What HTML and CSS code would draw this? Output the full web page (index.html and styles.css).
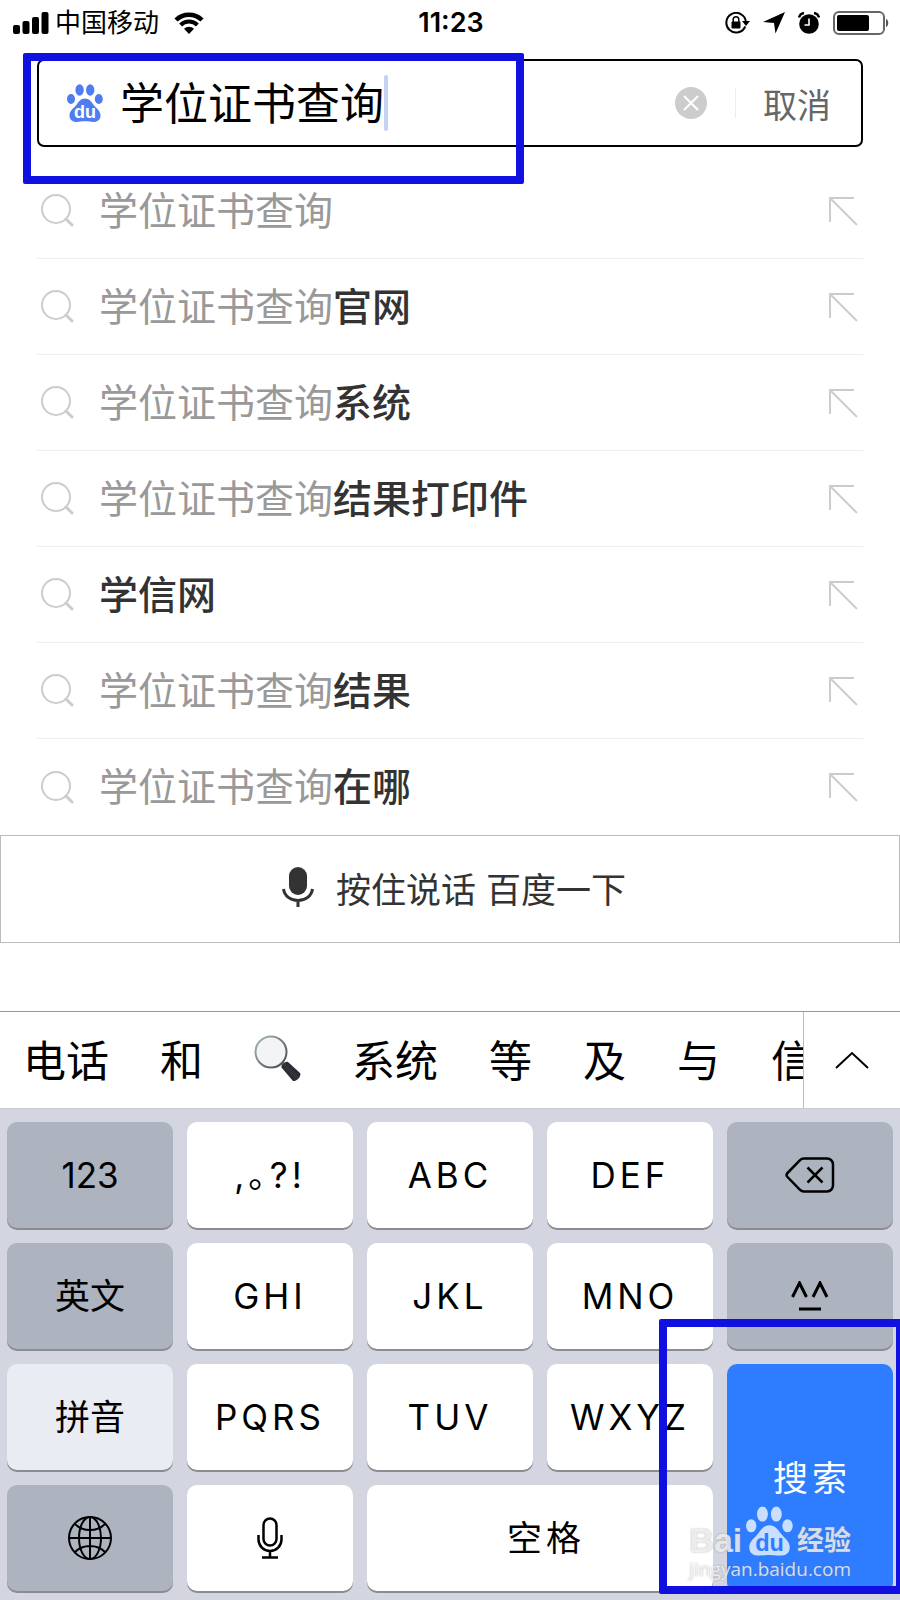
FILE: index.html
```
<!DOCTYPE html>
<html lang="zh-CN">
<head>
    <meta charset="UTF-8">
    <meta name="viewport" content="width=device-width, initial-scale=1.0">
    <title>学位证书查询</title>
    <link rel="stylesheet" href="styles.css">
</head>
<body>
    <!-- shared icons -->
    <svg class="defs" width="0" height="0" aria-hidden="true">
        <symbol id="icon-search" viewBox="0 0 33 33">
            <circle cx="15" cy="15" r="14" fill="none" stroke="#ccc" stroke-width="2"/>
            <path d="M25 25l6 6" stroke="#ccc" stroke-width="3" stroke-linecap="round"/>
        </symbol>
        <symbol id="icon-fill" viewBox="0 0 30 30">
            <path d="M26 2H2v24M2 2l27 27" fill="none" stroke="#ccc" stroke-width="2"/>
        </symbol>
        <symbol id="paw" viewBox="0 0 36 38">
            <ellipse cx="4" cy="15" rx="4" ry="5"/>
            <ellipse cx="12.6" cy="6" rx="4.2" ry="5.8"/>
            <ellipse cx="23.2" cy="6" rx="4.2" ry="5.8"/>
            <ellipse cx="31.8" cy="15" rx="4" ry="5"/>
            <path d="M18 14.5c4 0 6.300 3 8.500 6.200 2.500 3.400 7 5.800 7 10.800 0 4.300-3 6.500-7 6.500-3 0-5-.7-8.500-.7s-5.500.7-8.500.7c-4 0-7-2.200-7-6.500 0-5 4.500-7.400 7-10.800C11.700 17.500 14 14.500 18 14.500z"/>
        </symbol>
    </svg>

    <div class="status">
        <div class="status-left">
            <svg width="36" height="22" viewBox="0 0 36 22"><rect x="0" y="13" width="7" height="9" rx="2"/><rect x="9.500" y="9" width="7" height="13" rx="2"/><rect x="19" y="5" width="7" height="17" rx="2"/><rect x="28.500" y="0" width="7" height="22" rx="2"/></svg>
            <span class="carrier">中国移动</span>
            <svg class="wifi" width="30" height="22" viewBox="0 0 30 22"><path d="M2 8a18.500 18.500 0 0 1 26 0" fill="none" stroke="#000" stroke-width="4.500"/><path d="M6.600 13a12 12 0 0 1 16.800 0" fill="none" stroke="#000" stroke-width="4"/><path d="M15 22l-5-5.200a7.200 7.200 0 0 1 10 0z"/></svg>
        </div>
        <span class="time">11:23</span>
        <div class="status-right">
            <svg width="25" height="22" viewBox="0 0 25 22"><path d="M20.200 14.500A9.800 9.800 0 1 1 20.800 9" fill="none" stroke="#000" stroke-width="2"/><path d="M17 9h8l-4 5z"/><rect x="6.500" y="9.500" width="9" height="7" rx="1"/><path d="M8.200 10V7.500a2.800 2.800 0 0 1 5.600 0V10" fill="none" stroke="#000" stroke-width="1.500"/></svg>
            <svg width="22" height="22" viewBox="0 0 22 22"><path d="M22 0L12.500 21.500 11 11 0 10z"/></svg>
            <svg width="22" height="22" viewBox="0 0 22 22"><circle cx="11" cy="12" r="9.800"/><path d="M1 5.500A6 6 0 0 1 6 1M21 5.500A6 6 0 0 0 16 1" fill="none" stroke="#000" stroke-width="2.500"/><path d="M11 6.500V13H6.500" fill="none" stroke="#fff" stroke-width="1.600"/></svg>
            <svg width="56" height="24" viewBox="0 0 56 24"><rect x="1" y="1" width="50" height="22" rx="5" fill="none" stroke="#666" stroke-width="2"/><rect x="4" y="4" width="32" height="16" rx="2"/><path d="M53 8c3 1 3 7 0 8z" fill="#555"/></svg>
        </div>
    </div>

    <header class="header">
        <form class="search">
            <svg class="logo" width="36" height="38" fill="#4f7df0"><use href="#paw"/><text x="18" y="34" class="du">du</text></svg>
            <input type="text" id="word" aria-label="搜索" value="学位证书查询">
            <span class="caret"></span>
            <button type="reset" class="clear" aria-label="清除">
                <svg width="32" height="32" viewBox="0 0 32 32"><circle cx="16" cy="16" r="16" fill="#ccc"/><path d="M9 9l14 14M23 9L9 23" stroke="#fff" stroke-width="2"/></svg>
            </button>
            <button type="button" class="cancel">取消</button>
        </form>
        <div class="mark mark-search"></div>
    </header>

    <ul class="suggest">
        <li><svg width="33" height="33"><use href="#icon-search"/></svg><a href="#">学位证书查询</a><button aria-label="填入"><svg width="30" height="30"><use href="#icon-fill"/></svg></button></li>
        <li><svg width="33" height="33"><use href="#icon-search"/></svg><a href="#">学位证书查询<b>官网</b></a><button aria-label="填入"><svg width="30" height="30"><use href="#icon-fill"/></svg></button></li>
        <li><svg width="33" height="33"><use href="#icon-search"/></svg><a href="#">学位证书查询<b>系统</b></a><button aria-label="填入"><svg width="30" height="30"><use href="#icon-fill"/></svg></button></li>
        <li><svg width="33" height="33"><use href="#icon-search"/></svg><a href="#">学位证书查询<b>结果打印件</b></a><button aria-label="填入"><svg width="30" height="30"><use href="#icon-fill"/></svg></button></li>
        <li><svg width="33" height="33"><use href="#icon-search"/></svg><a href="#"><b>学信网</b></a><button aria-label="填入"><svg width="30" height="30"><use href="#icon-fill"/></svg></button></li>
        <li><svg width="33" height="33"><use href="#icon-search"/></svg><a href="#">学位证书查询<b>结果</b></a><button aria-label="填入"><svg width="30" height="30"><use href="#icon-fill"/></svg></button></li>
        <li><svg width="33" height="33"><use href="#icon-search"/></svg><a href="#">学位证书查询<b>在哪</b></a><button aria-label="填入"><svg width="30" height="30"><use href="#icon-fill"/></svg></button></li>
    </ul>

    <button class="voice">
        <svg width="32" height="40" viewBox="0 0 32 40"><rect x="7" y="0" width="18" height="28" rx="9" fill="#333"/><path d="M1.500 22c1 7 7 11.500 14.500 11.500S29.500 29 30.500 22M16 33v7" fill="none" stroke="#333" stroke-width="3"/></svg>
        按住说话 百度一下
    </button>

    <section class="keyboard">
        <div class="candidates">
            <div class="words">
                <button>电话</button>
                <button>和</button>
                <button aria-label="放大镜">
                    <svg width="47" height="48" viewBox="0 0 47 48">
                        <defs>
                            <linearGradient id="lens" x1="0" y1="0" x2="1" y2="1"><stop offset="0" stop-color="#a9bcc4"/><stop offset="1" stop-color="#444"/></linearGradient>
                            <linearGradient id="handle" x1="0" y1="1" x2="1" y2="0"><stop offset="0" stop-color="#111"/><stop offset=".5" stop-color="#33353d"/><stop offset="1" stop-color="#111"/></linearGradient>
                        </defs>
                        <path d="M27 28l4 4" stroke="#888" stroke-width="4"/>
                        <circle cx="17" cy="18" r="15.500" fill="#f2f4f6" stroke="url(#lens)" stroke-width="2"/>
                        <path d="M27.500 33.500c-1-2 4-7 6.500-5.500l12 11c2 3-4 9-7 8z" fill="url(#handle)"/>
                    </svg>
                </button>
                <button>系统</button>
                <button>等</button>
                <button>及</button>
                <button>与</button>
                <button>信</button>
            </div>
            <button class="expand" aria-label="展开">
                <svg width="34" height="18" viewBox="0 0 34 18"><path d="M1 17L17 2l16 15" fill="none" stroke="#000" stroke-width="2"/></svg>
            </button>
        </div>

        <div class="keys">
            <button class="gray num">123</button>
            <button class="punct">,。?!</button>
            <button>ABC</button>
            <button>DEF</button>
            <button class="gray" aria-label="删除">
                <svg width="50" height="36" viewBox="0 0 50 36"><path d="M19 1.500h23a6 6 0 0 1 6 6v21a6 6 0 0 1-6 6H19c-2 0-3-.6-4.200-1.800L2.500 20c-1.300-1.300-1.300-2.700 0-4L14.800 3.300C16 2.100 17 1.500 19 1.500z" fill="none" stroke="#000" stroke-width="2.500"/><path d="M22.500 10.500l15 15M37.500 10.500l-15 15" stroke="#000" stroke-width="2.500"/></svg>
            </button>

            <button class="gray cn">英文</button>
            <button>GHI</button>
            <button>JKL</button>
            <button>MNO</button>
            <button class="gray" aria-label="表情">
                <svg width="38" height="30" viewBox="0 0 38 30"><path d="M1.500 16L8.500 2l7 14M22 16l7-14 7 14M8 28h22" fill="none" stroke="#000" stroke-width="3"/></svg>
            </button>

            <button class="light cn">拼音</button>
            <button>PQRS</button>
            <button>TUV</button>
            <button>WXYZ</button>
            <button class="go">搜索</button>

            <button class="gray" aria-label="切换输入法">
                <svg width="44" height="44" viewBox="0 0 44 44" fill="none" stroke="#000" stroke-width="2"><circle cx="22" cy="22" r="21"/><ellipse cx="22" cy="22" rx="11" ry="21"/><path d="M22 1v42M1 22h42M7 8c8 8 22 8 30 0M7 36c8-8 22-8 30 0"/></svg>
            </button>
            <button aria-label="语音输入">
                <svg width="26" height="42" viewBox="0 0 26 42" fill="none" stroke="#000" stroke-width="2.500"><rect x="6.500" y="1.500" width="13" height="27" rx="6.500"/><path d="M1.500 18v4.500a11.500 11.500 0 0 0 23 0V18M13 34v6M5 40.500h16"/></svg>
            </button>
            <button class="space">空格</button>
        </div>

        <div class="mark mark-go"></div>
        <div class="watermark">
            <div class="brand">
                <span>Bai</span>
                <svg width="47" height="50" viewBox="0 0 36 38"><use href="#paw" width="36" height="38"/><text x="18" y="34" class="brand-du">du</text></svg>
                <span class="brand-cn">经验</span>
            </div>
            <div class="site">jingyan.baidu.com</div>
        </div>
    </section>
</body>
</html>
```
FILE: styles.css
```
* { box-sizing: border-box; }
body { margin: 0; background: #fff; color: #000; font-family: Inter, "Noto Sans CJK SC", sans-serif; }
button { margin: 0; padding: 0; border: none; background: none; color: inherit; font: inherit; cursor: pointer; }
svg { display: block; flex: none; }
.defs { position: absolute; }

.status { display: grid; grid-template-columns: 1fr auto 1fr; align-items: center; height: 45px; padding: 0 11px 0 13px; }
.status-left, .status-right { display: flex; align-items: center; }
.status-right { justify-content: flex-end; gap: 13px; }
.carrier { margin-left: 6px; font-size: 26px; line-height: 40px; }
.wifi { margin-left: 15px; }
.time { font-size: 27px; font-weight: 600; }

.header { position: relative; padding: 14px 37px 0; }
.search { display: flex; align-items: center; height: 88px; padding: 0 30px 0 28px; border: 2px solid #000; border-radius: 7px; }
.du { fill: #fff; font: bold 18px "Liberation Sans", sans-serif; text-anchor: middle; }
.search input { width: 6em; margin-left: 17px; padding: 0 0 5px; border: none; outline: none; background: none; color: #000; font: 44px/60px "Noto Sans CJK SC", sans-serif; }
.caret { width: 4px; height: 56px; border-radius: 2px; background: #c5d3f3; }
.clear { margin-left: auto; margin-right: 28px; }
.cancel { display: flex; align-items: center; height: 30px; padding-left: 27px; border-left: 1px solid #eee; color: #666; font-size: 34px; }

.mark { position: absolute; border: 8px solid #1010e0; border-radius: 2px; pointer-events: none; }
.mark-search { top: 8px; left: 23px; width: 501px; height: 131px; }
.mark-go { right: -4px; bottom: 6px; width: 245px; height: 275px; }

.suggest { margin: 16px 37px 0; padding: 0; list-style: none; }
.suggest li { display: flex; align-items: center; height: 96px; padding: 0 5px 0 4px; border-bottom: 1px solid #eee; }
.suggest li:last-child { border-bottom: none; }
.suggest a { flex: 1; margin-left: 25px; color: #999; font-size: 39px; line-height: 56px; text-decoration: none; }
.suggest b { color: #333; font-weight: 500; }

.voice { display: flex; align-items: center; justify-content: center; gap: 22px; width: 100%; height: 108px; padding: 0 0 4px 8px; border: 1px solid #bbb; color: #333; font-size: 35px; }

.keyboard { position: relative; margin-top: 68px; border-top: 1px solid #999; overflow: hidden; }
.candidates { display: flex; height: 97px; border-bottom: 1px solid #c8cbd0; }
.words { display: flex; flex: 1; align-items: center; gap: 51px; padding: 0 0 4px 23px; overflow: hidden; font-size: 43px; white-space: nowrap; }
.words button { flex: none; }
.expand { display: flex; align-items: center; justify-content: center; width: 97px; border-left: 1px solid #bbb; }

.keys { display: grid; grid-template-columns: repeat(5, 1fr); grid-auto-rows: 106px; gap: 15px 14px; padding: 13px 7px 9px; background: #d3d6e0; }
.keys button { display: flex; align-items: center; justify-content: center; border-radius: 10px; background: #fff; box-shadow: 0 2px 0 #8b8c90; font-size: 35px; letter-spacing: 4px; }
.keys .gray { background: #adb3bf; }
.keys .light { background: #e9edf3; }
.keys .num, .keys .cn { letter-spacing: 0; }
.keys .punct { padding-bottom: 6px; font-feature-settings: "halt"; }
.keys .cn, .keys .space, .keys .go { padding-bottom: 5px; }
.keys .space { grid-column: span 2; padding-left: 12px; }
.keys .go { grid-row: span 2; padding-left: 4px; background: #2e7cff; color: #fff; }

.watermark { position: absolute; right: 49px; bottom: 18px; color: rgba(255, 255, 255, .75); text-shadow: 0 0 2px rgba(120, 120, 120, .6); }
.brand { display: flex; align-items: flex-end; justify-content: space-between; height: 52px; fill: rgba(255, 255, 255, .75); font: bold 34px/32px "Liberation Sans", sans-serif; }
.brand-cn { font: bold 27px/34px "Noto Sans CJK SC", sans-serif; }
.brand-du { fill: #2e7cff; font: bold 18px "Liberation Sans", sans-serif; text-anchor: middle; text-shadow: none; }
.site { font: 19px/26px "Open Sans", sans-serif; }
```
